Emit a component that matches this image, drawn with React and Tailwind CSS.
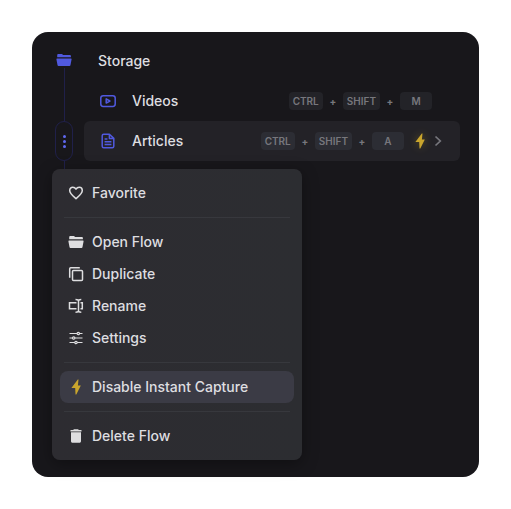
import React from "react";

function Icon({ children, className = "" }) {
  return (
    <svg viewBox="0 0 16 16" aria-hidden="true" fill="none" stroke="currentColor" strokeWidth="1.5" className={`size-4 shrink-0 ${className}`}>
      {children}
    </svg>
  );
}

const FolderIcon = (props) => (
  <Icon {...props}>
    <path fill="currentColor" stroke="none" d="M2.500 2h3.300c.4 0 .6.2.8.5l.5.500h6.600c.8 0 1.200.5 1.200 1.100V5.200H1.200V3.200C1.200 2.400 1.700 2 2.500 2zM1 6.500h14c.4 0 .7.3.6.8l-1.100 5.700c-.1.700-.6 1-1.200 1H2.700c-.6 0-1.100-.3-1.200-1L.4 7.300c-.1-.5.2-.8.6-.8z" />
  </Icon>
);
const VideoIcon = (props) => (
  <Icon {...props}>
    <rect x=".8" y="2.700" width="14.400" height="10.800" rx="2.400" />
    <path d="M6.200 5.900v4.200L9.900 8z" strokeLinejoin="round" />
  </Icon>
);
const ArticleIcon = (props) => (
  <Icon {...props}>
    <path strokeLinejoin="round" d="M9.400 1.200H3.700c-.9 0-1.500.6-1.500 1.500v10.600c0 .9.6 1.500 1.500 1.500h8.600c.9 0 1.500-.6 1.500-1.500V5.400zM9.400 1.200v4.200h4.400" />
    <path d="M4.600 6h2.800M4.600 8.800h6.800M4.600 11.600h6.800" />
  </Icon>
);
const HeartIcon = (props) => (
  <Icon {...props}>
    <path strokeLinejoin="round" d="M8 13.600C5.200 11.200 1.700 8.600 1.700 5.500 1.700 3.500 3.100 2.300 4.800 2.300 6.200 2.300 7.300 3 8 4.200 8.700 3 9.800 2.300 11.200 2.300c1.700 0 3.100 1.200 3.100 3.200 0 3.100-3.500 5.700-6.300 8.100z" />
  </Icon>
);
const DuplicateIcon = (props) => (
  <Icon {...props}>
    <rect x="4.500" y="4.500" width="10" height="10" rx="1" />
    <path d="M1.700 11.800V2.700c0-.6.4-1 1-1h9.100" />
  </Icon>
);
const RenameIcon = (props) => (
  <Icon {...props}>
    <path d="M8.500 4.800H1.500v6h7M12.500 4.800h1.800v6h-1.800M10.500 2.500v11M7.500 1.600c1.800 0 3 .3 3 1.500 0-1.200 1-1.500 2.800-1.500M7.500 14.200c1.800 0 3-.3 3-1.500 0 1.200 1 1.500 2.800 1.500" />
  </Icon>
);
const SettingsIcon = (props) => (
  <Icon {...props}>
    <g strokeWidth="1.200">
      <path d="M1.500 3.500h7.600M11.500 3.500h3M1.500 8h3M6.900 8h7.600M1.500 12.500h5.300M9.200 12.500h5.300" />
      <circle cx="10.300" cy="3.500" r="1.200" />
      <circle cx="5.700" cy="8" r="1.200" />
      <circle cx="8" cy="12.500" r="1.200" />
    </g>
  </Icon>
);
const BoltIcon = (props) => (
  <Icon {...props}>
    <path fill="currentColor" stroke="none" d="M9.800.5 3.400 9h3.800L7.500 15.500h.8L12.800 6.500H9.900L10.500.5z" />
  </Icon>
);
const TrashIcon = (props) => (
  <Icon {...props}>
    <path fill="currentColor" stroke="none" d="M5.900 1.200h4.200l.7.700h2.700v1.500h-11V1.900h2.700zM3 4.300h10v8.900c0 .9-.7 1.500-1.500 1.500h-7c-.8 0-1.500-.6-1.500-1.500z" />
  </Icon>
);
const ChevronIcon = (props) => (
  <Icon {...props}>
    <path d="m5.500 3.500 4.800 4.500-4.800 4.500" strokeWidth="1.700" />
  </Icon>
);

function Shortcut({ keys, active }) {
  return (
    <span className="ml-auto flex items-center gap-2 text-[10px] leading-none font-semibold text-[#77777d]">
      {keys.map((key, i) => (
        <React.Fragment key={key}>
          {i > 0 && <span className="flex w-1 justify-center font-bold">+</span>}
          <kbd className={`flex h-[18px] min-w-8 items-center justify-center rounded px-1 font-[inherit] ${active ? "bg-[#2c2d34]" : "bg-[#232328]"}`}>
            {key}
          </kbd>
        </React.Fragment>
      ))}
    </span>
  );
}

function MenuItem({ icon: Glyph, label, active, iconClass }) {
  return (
    <button
      type="button"
      role="menuitem"
      className={`flex h-8 w-full items-center gap-2 rounded-lg px-2 text-left ${active ? "bg-[#3b3b45]" : ""}`}
    >
      <Glyph className={iconClass} />
      {label}
    </button>
  );
}

const Divider = () => <hr className="mx-1 my-2 border-t border-[#37383d]" />;

export default function App() {
  return (
    <main className="min-h-screen bg-white p-8 font-['Inter','Liberation_Sans',sans-serif] text-sm font-medium text-[#dedee0]">
      <section className="min-h-[calc(100vh-64px)] rounded-2xl bg-[#18171b] py-2 pr-[19px] pl-5">
        <div className="relative flex gap-2">
          <div className="flex w-6 flex-col items-center">
            <FolderIcon className="mt-3 text-[#5059df]" />
            <span className="w-px grow bg-[#20204a]" />
            <button type="button" aria-label="Articles options" className="flex h-10 w-[18px] flex-col items-center justify-center gap-[2px] rounded-full border border-[#20204a]">
              <span className="size-[3px] rounded-full bg-[#5f68f0]" />
              <span className="size-[3px] rounded-full bg-[#5f68f0]" />
              <span className="size-[3px] rounded-full bg-[#5f68f0]" />
            </button>
            <span className="h-2 w-px bg-[#20204a]" />
          </div>
          <div className="grow pb-2">
            <h1 className="flex h-[41px] items-center pl-[14px]">Storage</h1>
            <button type="button" className="flex h-10 w-full items-center gap-4 pr-7 pl-4 text-left">
              <VideoIcon className="text-[#5059df]" />
              Videos
              <Shortcut keys={["CTRL", "SHIFT", "M"]} />
            </button>
            <button type="button" className="flex h-10 w-full items-center rounded-md bg-[#232227] pr-[14px] pl-4 text-left">
              <ArticleIcon className="mr-4 text-[#5059df]" />
              Articles
              <Shortcut keys={["CTRL", "SHIFT", "A"]} active />
              <BoltIcon className="ml-2 text-[#c9a52d] drop-shadow-[0_0_4px_#c9a52d66]" />
              <ChevronIcon className="ml-[2px] text-[#77777d]" />
            </button>
          </div>
          <div role="menu" aria-label="Articles" className="absolute top-full left-0 w-[250px] rounded-lg bg-linear-to-r from-[#2d2c31] to-[#2c2d31] p-2 shadow-[0_4px_16px_#00000059] [text-shadow:0_1px_1px_#00000066]">
            <MenuItem icon={HeartIcon} label="Favorite" />
            <Divider />
            <MenuItem icon={FolderIcon} label="Open Flow" />
            <MenuItem icon={DuplicateIcon} label="Duplicate" />
            <MenuItem icon={RenameIcon} label="Rename" />
            <MenuItem icon={SettingsIcon} label="Settings" />
            <Divider />
            <MenuItem icon={BoltIcon} label="Disable Instant Capture" iconClass="text-[#c9a52d]" active />
            <Divider />
            <MenuItem icon={TrashIcon} label="Delete Flow" />
          </div>
        </div>
      </section>
    </main>
  );
}
